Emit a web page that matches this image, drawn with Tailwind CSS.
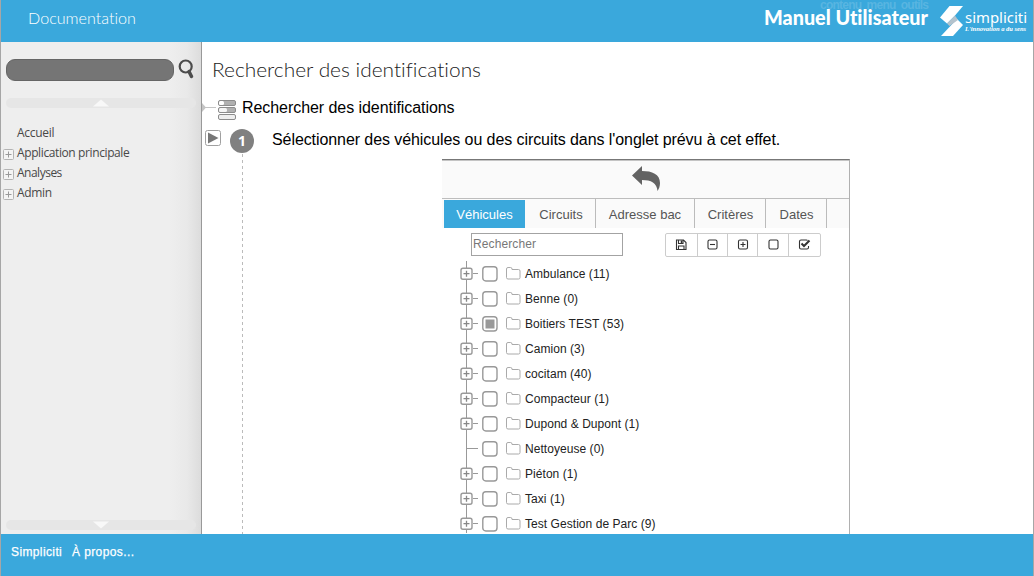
<!DOCTYPE html>
<html lang="fr">
<head>
<meta charset="utf-8">
<title>Rechercher des identifications</title>
<script src="https://cdn.jsdelivr.net/npm/@tailwindcss/browser@4"></script>
</head>
<body class="w-[1034px] h-[576px] overflow-hidden bg-white font-['Liberation_Sans',sans-serif] text-black [font-variant-ligatures:none]">
<div class="flex flex-col h-full border-x border-[#a6a6a6]">
  <header class="relative flex h-[42px] shrink-0 justify-between bg-[#3aa8dc] text-white">
    <svg class="w-[150px] h-[42px]" viewBox="1 0 150 42"><text x="28" y="24" textLength="108" lengthAdjust="spacingAndGlyphs" font-family="Lato" font-weight="300" font-size="16" fill="#fff">Documentation</text></svg>
    <svg class="w-[292px] h-[42px]" viewBox="741 0 292 42">
      <text x="820" y="9" textLength="109" font-family="Liberation Sans" font-size="12" font-weight="bold" fill="#58b5e1" xml:space="preserve">contenu  menu  outils</text>
      <text x="764" y="25" textLength="164" lengthAdjust="spacingAndGlyphs" font-family="Lato" font-weight="900" font-size="20" fill="#fff">Manuel Utilisateur</text>
      <path d="M949.500 6H963L955 15.500 947 23.500 940 17.500z" fill="#fff"/>
      <path d="M957 19 963 25 953 36H941L949 27.500z" fill="#fff"/>
      <path d="M955 15.500 958 20 949.500 26 947 23.500z" fill="#b4c3cd"/>
      <text x="965" y="23" textLength="62" lengthAdjust="spacingAndGlyphs" font-family="Noto Sans" font-size="14.500" fill="#fff">simpliciti</text>
      <text x="965" y="31" textLength="61" lengthAdjust="spacingAndGlyphs" font-family="Liberation Serif" font-style="italic" font-weight="bold" font-size="6" fill="#fff">L'innovation a du sens</text>
    </svg>
  </header>

  <div class="flex h-[492px] shrink-0">
    <aside class="flex w-[201px] shrink-0 flex-col border-r border-[#999] bg-[linear-gradient(to_right,#eeeeee_84%,#e9e9e9_93%,#dcdcdc)]">
      <div class="flex pt-[17px] pl-[5px]">
        <div class="h-[22px] w-[168px] rounded-[9px] border border-[#656565] bg-[#757575]"></div>
        <svg class="ml-[4px] h-[22px] w-[18px]" viewBox="178 59 18 22" fill="none" stroke="#4c4c4c"><circle cx="185.700" cy="66.500" r="6" stroke-width="2.200"/><path d="M189 71.500 191.500 76.500" stroke-width="3.500" stroke-linecap="round"/></svg>
      </div>
      <div class="mt-[17px] ml-[5px] flex h-[10px] w-[190px] justify-center rounded-[5px] bg-[#e6e6e6]"><svg class="h-[10px] w-4" viewBox="0 0 16 10"><path d="M0 8.500 8 1.500 16 8.500z" fill="#f8f8f8"/></svg></div>
      <nav class="mt-[15px] ml-[2px] h-[393px] font-['Open_Sans',sans-serif] text-[12px] leading-5 text-[#484848]">
        <div class="flex h-5"><span class="w-[14px]"></span><span class="tracking-[-0.3px]">Accueil</span></div>
        <div class="flex h-5"><svg class="mt-[6px] mr-[3px] h-[11px] w-[11px]" viewBox="0 0 11 11"><use href="#plus"/></svg><span class="tracking-[-0.39px]">Application principale</span></div>
        <div class="flex h-5"><svg class="mt-[6px] mr-[3px] h-[11px] w-[11px]" viewBox="0 0 11 11"><use href="#plus"/></svg><span class="tracking-[-0.5px]">Analyses</span></div>
        <div class="flex h-5"><svg class="mt-[6px] mr-[3px] h-[11px] w-[11px]" viewBox="0 0 11 11"><use href="#plus"/></svg><span class="tracking-[-0.33px]">Admin</span></div>
      </nav>
      <div class="mt-[4px] ml-[5px] flex h-[10px] w-[190px] justify-center rounded-[5px] bg-[#e6e6e6]"><svg class="h-[10px] w-4" viewBox="0 0 16 10"><path d="M0 1.500 8 8.500 16 1.500z" fill="#f8f8f8"/></svg></div>
    </aside>

    <main class="flex flex-1 flex-col overflow-hidden">
      <svg class="h-[52px] w-[300px] shrink-0" viewBox="202 42 300 52"><text x="212" y="77" textLength="269" lengthAdjust="spacingAndGlyphs" font-family="Lato" font-weight="300" font-size="20" fill="#222">Rechercher des identifications</text></svg>
      <div class="flex h-[30px] shrink-0">
        <svg class="h-[30px] w-[40px]" viewBox="202 94 40 30">
          <path d="M202 103 206 107.500 202 112z" fill="#c4c4c4"/><path d="M205 107.500H216" stroke="#c4c4c4"/>
          <g stroke="#8c8c8c" fill="#b0b0b0"><rect x="218.500" y="100.500" width="17" height="5" rx="1.500"/><rect x="218.500" y="107.500" width="17" height="5" rx="1.500"/><rect x="218.500" y="114.500" width="17" height="5" rx="1.500" fill="#eee"/></g>
          <rect x="219" y="101" width="5" height="4" rx="1.500" fill="#fff"/><rect x="219" y="108" width="8" height="4" rx="1.500" fill="#f5f5f5"/>
        </svg>
        <h2 class="mt-[5px] text-[16px] leading-[18px] whitespace-nowrap tracking-[-0.06px]">Rechercher des identifications</h2>
      </div>
      <div class="flex h-[35px] shrink-0">
        <svg class="h-[35px] w-[70px]" viewBox="202 124 70 35">
          <rect x="205.500" y="130.500" width="15" height="15" rx="2" fill="#fff" stroke="#a0a0a0"/><path d="M208 132.500 218.500 138 208 143.500z" fill="#777"/>
          <circle cx="242" cy="141" r="12" fill="#808080"/><text x="242" y="146" text-anchor="middle" font-family="Open Sans" font-weight="bold" font-size="14" fill="#fff">1</text>
          <path d="M242.500 154V159" stroke="#bbb" stroke-dasharray="3 3"/>
        </svg>
        <p class="mt-[7px] text-[16px] leading-[18px] whitespace-nowrap tracking-[-0.08px]">Sélectionner des véhicules ou des circuits dans l'onglet prévu à cet effet.</p>
      </div>
      <div class="flex h-[375px] shrink-0">
        <svg class="h-[375px] w-[240px]" viewBox="202 159 240 375"><path d="M242.500 160V534" stroke="#bbb" stroke-dasharray="3 3"/></svg>
        <section class="flex w-[408px] flex-col border-t border-r border-t-[#777] border-r-[#b0b0b0]">
          <div class="flex h-[39px] shrink-0 justify-center border-t border-b border-t-[#c4c4c4] border-b-[#bdbdbd] bg-[#fafafa]">
            <svg class="h-[37px] w-[30px]" viewBox="631 161 30 37"><path d="M632 175.500 642 166V171C652 171 660 174 660 183C660 186 659 189 657.500 191C657 183 651 180 642 180V185z" fill="#636363"/></svg>
          </div>
          <div class="flex h-[29px] shrink-0 bg-[#fafafa] text-[13px] leading-[32px] text-[#555]">
            <div class="ml-[2px] mt-px h-7 w-[81px] bg-[#3aa8dc] text-center leading-[30px] text-white">Véhicules</div>
            <div class="w-[71px] border-r border-[#bbb] pl-[2px] text-center">Circuits</div>
            <div class="w-[99px] border-r border-[#bbb] text-center">Adresse bac</div>
            <div class="w-[71px] border-r border-[#bbb] pl-px text-center">Critères</div>
            <div class="w-[61px] border-r border-[#bbb] pl-px text-center">Dates</div>
          </div>
          <div class="flex h-[33px] shrink-0 pl-[29px] pt-[5px]">
            <div class="h-[23px] w-[152px] border border-[#a3a3a3] pl-px text-[12px] leading-[20px] tracking-[0.1px] text-[#777]">Rechercher</div>
            <svg class="ml-[42px] h-[24px] w-[156px]" viewBox="665 233 156 24" fill="none">
              <rect x="665.500" y="233.500" width="155" height="23" rx="1.500" stroke="#ccc"/>
              <path d="M697.500 234V256M727.500 234V256M757.500 234V256M788.500 234V256" stroke="#ccc"/>
              <g stroke="#333" stroke-width="1.100">
                <path d="M676.500 240H683.500L686 242.500V249.500H676.500zM678.500 240V243.500H683V240M678.500 249.500V246H684V249.500"/><path d="M681.500 240.500V243" stroke-width="1.500"/>
                <rect x="708" y="240" width="9" height="9" rx="1.500"/><path d="M710 244.500H715"/>
                <rect x="738.500" y="240" width="9" height="9" rx="1.500"/><path d="M740.500 244.500H745.500M743 242V247"/>
                <rect x="769" y="240" width="9" height="9" rx="1.500"/>
                <path d="M807.500 240.500Q807 240 806.500 240H801Q799.500 240 799.500 241.500V247.500Q799.500 249 801 249H807Q808.500 249 808.500 247.500V246"/><path d="M801.500 243.500 804 246 809.500 240.500" stroke-width="2"/>
              </g>
            </svg>
          </div>
          <div id="tree" class="flex h-[272px] flex-col overflow-hidden pl-[17px] text-[12px] text-[#222]"></div>
        </section>
      </div>
    </main>
  </div>

  <footer class="flex h-[42px] shrink-0 bg-[#3aa8dc] pt-[10px] pl-[10px] text-[12px] leading-[17px] text-white [-webkit-text-stroke:0.25px_white]">
    <span class="w-[61px] tracking-[0.38px]">Simpliciti</span><span class="tracking-[0.4px]">À propos...</span>
  </footer>
</div>

<svg class="hidden">
  <symbol id="plus" viewBox="0 0 11 11"><rect x=".5" y=".5" width="10" height="10" rx="1" fill="#f4f4f4" stroke="#b3b3b3"/><path d="M2.500 5.500H8.500M5.500 2.500V8.500" stroke="#999"/></symbol>
  <symbol id="node" viewBox="0 0 20 25"><path d="M7.500 0V25" stroke="#999"/><path d="M14 12.500H19" stroke="#999"/><rect x="2" y="7.200" width="11" height="11" rx="2" fill="#fff" stroke="#999" stroke-width="1.400"/><path d="M4.500 12.700H10.500M7.500 9.700V15.700" stroke="#888" stroke-width="1.300"/></symbol>
  <symbol id="leaf" viewBox="0 0 20 25"><path d="M7.500 0V25M7.500 12.500H19" fill="none" stroke="#999"/></symbol>
  <symbol id="box" viewBox="0 0 16 25"><rect x=".8" y="5.800" width="14.200" height="14.200" rx="3" fill="#fff" stroke="#999" stroke-width="1.400"/></symbol>
  <symbol id="folder" viewBox="0 0 15 25"><path d="M.5 8Q.5 6.500 2 6.500H4.500Q6 6.500 6 8V8.500H12.500Q14 8.500 14 10V16.500Q14 18 12.500 18H2Q.5 18 .5 16.500z" fill="none" stroke="#aaa"/></symbol>
</svg>
<script>
const items = ['Ambulance (11)','Benne (0)','Boitiers TEST (53)','Camion (3)','cocitam (40)','Compacteur (1)','Dupond & Dupont (1)','Nettoyeuse (0)','Piéton (1)','Taxi (1)','Test Gestion de Parc (9)'];
document.getElementById('tree').innerHTML = items.map((t, i) =>
  `<div class="flex h-[25px] shrink-0"><svg class="h-[25px] w-5"><use href="#${i === 7 ? 'leaf' : 'node'}"/></svg><svg class="ml-[3px] h-[25px] w-4"><use href="#box"/>${i === 2 ? '<rect x="3.500" y="8.500" width="9" height="9" fill="#999"/>' : ''}</svg><svg class="ml-2 h-[25px] w-[15px]"><use href="#folder"/></svg><span class="ml-1 leading-[27px] tracking-[0.05px] whitespace-nowrap">${t.replace('&', '&amp;')}</span></div>`).join('');
</script>
</body>
</html>
